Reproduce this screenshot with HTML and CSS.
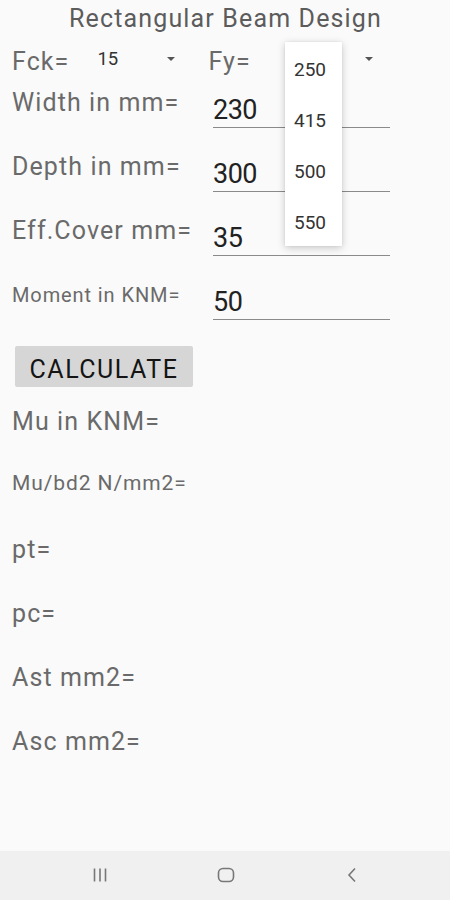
FILE: index.html
```html
<!DOCTYPE html>
<html>
<head>
<meta charset="utf-8">
<link rel="stylesheet" href="styles.css">
</head>
<body>
<div class="screen">
  <main class="content">
    <h1 class="title">Rectangular Beam Design</h1>
    <div class="grade-row">
      <span class="label">Fck=</span>
      <div class="spinner fck">
        <span class="spin-val">15</span>
        <span class="caret"></span>
      </div>
      <span class="label">Fy=</span>
      <div class="spinner fyspin">
        <span class="caret"></span>
      </div>
    </div>
    <div class="row">
      <span class="label">Width in mm=</span>
      <div class="field"><span class="value">230</span></div>
    </div>
    <div class="row">
      <span class="label">Depth in mm=</span>
      <div class="field"><span class="value">300</span></div>
    </div>
    <div class="row">
      <span class="label">Eff.Cover mm=</span>
      <div class="field"><span class="value">35</span></div>
    </div>
    <div class="row">
      <span class="label small">Moment in KNM=</span>
      <div class="field"><span class="value">50</span></div>
    </div>
    <button class="calc">CALCULATE</button>
    <div class="results">
      <div class="res">Mu in KNM=</div>
      <div class="res small up">Mu/bd2 N/mm2=</div>
      <div class="res">pt=</div>
      <div class="res">pc=</div>
      <div class="res">Ast mm2=</div>
      <div class="res">Asc mm2=</div>
    </div>
    <ul class="popup">
      <li>250</li>
      <li>415</li>
      <li>500</li>
      <li>550</li>
    </ul>
  </main>
  <nav class="navbar">
    <svg class="nav-icon" width="20" height="20" viewBox="0 0 20 20"><path d="M4.5 3.5v13M10 3.5v13M15.5 3.5v13" stroke="#777" stroke-width="1.6" fill="none"/></svg>
    <svg class="nav-icon" width="20" height="20" viewBox="0 0 20 20"><rect x="2.5" y="3.5" width="15" height="13" rx="4.5" stroke="#777" stroke-width="1.6" fill="none"/></svg>
    <svg class="nav-icon" width="20" height="20" viewBox="0 0 20 20"><path d="M13 3.5L7 10l6 6.5" stroke="#777" stroke-width="1.6" fill="none"/></svg>
  </nav>
</div>
</body>
</html>
```

FILE: styles.css
```css
* { box-sizing: border-box; }
html, body { margin: 0; padding: 0; }
body {
  background: #fafafa;
  font-family: Roboto, "Liberation Sans", sans-serif;
}
.screen {
  width: 450px;
  height: 900px;
  display: flex;
  flex-direction: column;
}
.content {
  flex: 1;
  position: relative;
}
.title {
  margin: 0;
  height: 38px;
  line-height: 38px;
  text-align: center;
  font-size: 25px;
  font-weight: 400;
  letter-spacing: 1.15px;
  color: #5c5c5c;
  padding-left: 1px;
}
.grade-row {
  height: 48px;
  display: flex;
  align-items: center;
  padding-left: 12px;
}
.label {
  font-size: 25px;
  letter-spacing: 1.1px;
  color: #6a6a6a;
  line-height: 32px;
  white-space: nowrap;
}
.label.small {
  font-size: 20px;
  letter-spacing: 0.9px;
}
.spinner {
  display: flex;
  align-items: center;
  height: 32px;
  padding-bottom: 6px;
}
.fck { width: 139px; padding-left: 28px; }
.fyspin { width: 130px; padding-left: 114px; }
.spin-val {
  font-size: 18.5px;
  color: #333;
}
.caret {
  width: 0; height: 0;
  border-left: 4.5px solid transparent;
  border-right: 4.5px solid transparent;
  border-top: 4.5px solid #555;
}
.fck .caret { margin-left: 49px; }
.row {
  height: 64px;
  display: flex;
  align-items: flex-start;
  padding-left: 12px;
}
.row .label { width: 201px; padding-top: 1px; }
.row .label.small { line-height: 30px; padding-top: 2px; }
.field {
  width: 177px;
  height: 42px;
  padding-top: 8px;
  border-bottom: 1.5px solid #8a8a8a;
}
.value {
  display: block;
  font-size: 27px;
  letter-spacing: -0.5px;
  line-height: 32px;
  color: #222;
}
.calc {
  display: block;
  margin: 4px 0 0 15px;
  width: 178px;
  height: 41px;
  border: none;
  border-radius: 2px;
  background: #d6d6d6;
  font-family: Roboto, "Liberation Sans", sans-serif;
  font-size: 25px;
  letter-spacing: 1.5px;
  color: #141414;
  padding: 5px 0 0;
}
.results {
  margin-top: 3px;
  padding-left: 12px;
}
.res {
  height: 64px;
  line-height: 64px;
  font-size: 25px;
  letter-spacing: 1.1px;
  color: #6a6a6a;
}
.res.small { font-size: 21px; letter-spacing: 0.9px; }
.res.up { line-height: 58px; }
.popup {
  position: absolute;
  left: 285px;
  top: 42px;
  width: 57px;
  margin: 0;
  padding: 1.5px 0 0;
  list-style: none;
  background: #fff;
  box-shadow: 0 2px 8px rgba(0,0,0,0.2), 0 0 2px rgba(0,0,0,0.08);
  height: 204px;
}
.popup li {
  height: 51px;
  line-height: 51px;
  padding-left: 9px;
  font-size: 19px;
  color: #333;
}
.navbar {
  height: 49px;
  background: #f0f0f0;
  display: flex;
  align-items: center;
  justify-content: space-between;
  padding: 0 88px 2px 90px;
}
.nav-icon { display: block; }
```
